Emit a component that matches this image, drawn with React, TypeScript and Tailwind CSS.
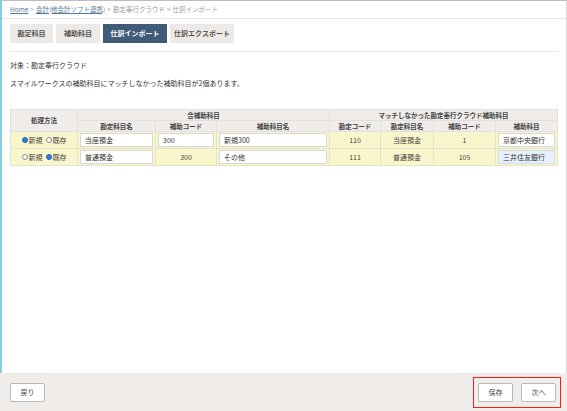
import React from "react";

const font = { fontFamily: '"Noto Sans CJK JP", "Noto Sans", sans-serif' };

function Radio({ checked, label }: { checked: boolean; label: string }) {
  return (
    <span className="inline-flex items-center gap-[1px]">
      {checked ? (
        <span className="inline-block w-[6px] h-[6px] rounded-full bg-[#2f7de1] border border-[#1f5fb8]" />
      ) : (
        <span className="inline-block w-[6px] h-[6px] rounded-full bg-white border border-[#8a8a8a]" />
      )}
      <span>{label}</span>
    </span>
  );
}

function Input({ value, blue }: { value: string; blue?: boolean }) {
  return (
    <div
      className={`h-[14px] border ${blue ? "bg-[#e8f0fe] border-[#d3dbe8]" : "bg-white border-[#d8d8d8]"} flex items-center px-[4px] text-[7px] text-[#333]`}
    >
      {value}
    </div>
  );
}

export default function App() {
  const th = "border border-[#e2dfdc] bg-[#efecea] text-[6.5px] font-bold text-[#444] text-center h-[11px] p-0 leading-none";
  const td = "border border-[#e4e1cf] bg-[#f9f6cb] text-[7px] text-[#444] px-[2px] py-[1px] h-[17px] text-center leading-none";
  return (
    <div className="w-[567px] h-[411px] flex flex-col bg-white overflow-hidden text-[#333]" style={font}>
      <div className="flex-1 flex flex-col border-l-2 border-l-[#86cde0] border-r border-r-[#d8d8d8] border-t border-t-[#bdbdbd]">
        <div className="h-[18px] flex items-center pl-[8px] text-[6.5px] text-[#9a9a9a] gap-[2px] border-b border-b-[#e6e6e6]">
          <span className="underline text-[#56789a]">Home</span>
          <span>&gt;</span>
          <span className="underline text-[#56789a]">会計(他会計ソフト連携)</span>
          <span>&gt;</span>
          <span>勘定奉行クラウド</span>
          <span>&gt;</span>
          <span>仕訳インポート</span>
        </div>
        <div className="mx-[8px] mt-[5px] pb-[8px] border-b border-b-[#e8e8e8] flex gap-[3px]">
          <div className="h-[19px] w-[43px] bg-[#ece9e7] text-[#555] text-[7px] font-bold flex items-center justify-center">勘定科目</div>
          <div className="h-[19px] w-[44px] bg-[#ece9e7] text-[#555] text-[7px] font-bold flex items-center justify-center">補助科目</div>
          <div className="h-[19px] w-[64px] bg-[#3f5b78] text-white text-[7px] font-bold flex items-center justify-center">仕訳インポート</div>
          <div className="h-[19px] w-[64px] bg-[#ece9e7] text-[#555] text-[7px] font-bold flex items-center justify-center">仕訳エクスポート</div>
        </div>
        <div className="pl-[8px] mt-[8px] text-[7px] text-[#333] leading-[10px]">対象：勘定奉行クラウド</div>
        <div className="pl-[8px] mt-[8px] text-[7px] text-[#333] leading-[10px]">
          スマイルワークスの補助科目にマッチしなかった補助科目が2個あります。
        </div>
        <div className="pl-[8px] mt-[21px]">
          <table className="table-fixed border-collapse w-[547px] border border-[#dcdcdc]">
            <colgroup>
              <col className="w-[67px]" />
              <col className="w-[78px]" />
              <col className="w-[61px]" />
              <col className="w-[113px]" />
              <col className="w-[51px]" />
              <col className="w-[53px]" />
              <col className="w-[62px]" />
              <col className="w-[62px]" />
            </colgroup>
            <thead>
              <tr>
                <th rowSpan={2} className={th}>処理方法</th>
                <th colSpan={3} className={th}>合補助科目</th>
                <th colSpan={4} className={th}>マッチしなかった勘定奉行クラウド補助科目</th>
              </tr>
              <tr>
                <th className={th}>勘定科目名</th>
                <th className={th}>補助コード</th>
                <th className={th}>補助科目名</th>
                <th className={th}>勘定コード</th>
                <th className={th}>勘定科目名</th>
                <th className={th}>補助コード</th>
                <th className={th}>補助科目</th>
              </tr>
            </thead>
            <tbody>
              <tr>
                <td className={td}>
                  <div className="flex items-center justify-center gap-[3px]">
                    <Radio checked label="新規" />
                    <Radio checked={false} label="既存" />
                  </div>
                </td>
                <td className={td}><Input value="当座預金" /></td>
                <td className={td}><Input value="300" /></td>
                <td className={td}><Input value="新規300" /></td>
                <td className={td}>110</td>
                <td className={td}>当座預金</td>
                <td className={td}>1</td>
                <td className={td}><Input value="京都中央銀行" /></td>
              </tr>
              <tr>
                <td className={td}>
                  <div className="flex items-center justify-center gap-[3px]">
                    <Radio checked={false} label="新規" />
                    <Radio checked label="既存" />
                  </div>
                </td>
                <td className={td}><Input value="普通預金" /></td>
                <td className={td}>300</td>
                <td className={td}><Input value="その他" /></td>
                <td className={td}>111</td>
                <td className={td}>普通預金</td>
                <td className={td}>105</td>
                <td className={td}><Input value="三井住友銀行" blue /></td>
              </tr>
            </tbody>
          </table>
        </div>
      </div>
      <div className="h-[38px] bg-[#efecea] flex items-center justify-between pl-[10px] pr-[6px]">
        <button className="h-[19px] w-[35px] bg-white border border-[#b8b8b8] rounded-[2px] text-[7px] text-[#444]">戻り</button>
        <div className="h-[31px] border-[1.5px] border-[#ff1a1a] flex items-center gap-[8px] px-[4px]">
          <button className="h-[19px] w-[35px] bg-white border border-[#b8b8b8] rounded-[2px] text-[7px] text-[#444]">保存</button>
          <button className="h-[19px] w-[35px] bg-white border border-[#b8b8b8] rounded-[2px] text-[7px] text-[#444]">次へ</button>
        </div>
      </div>
    </div>
  );
}
